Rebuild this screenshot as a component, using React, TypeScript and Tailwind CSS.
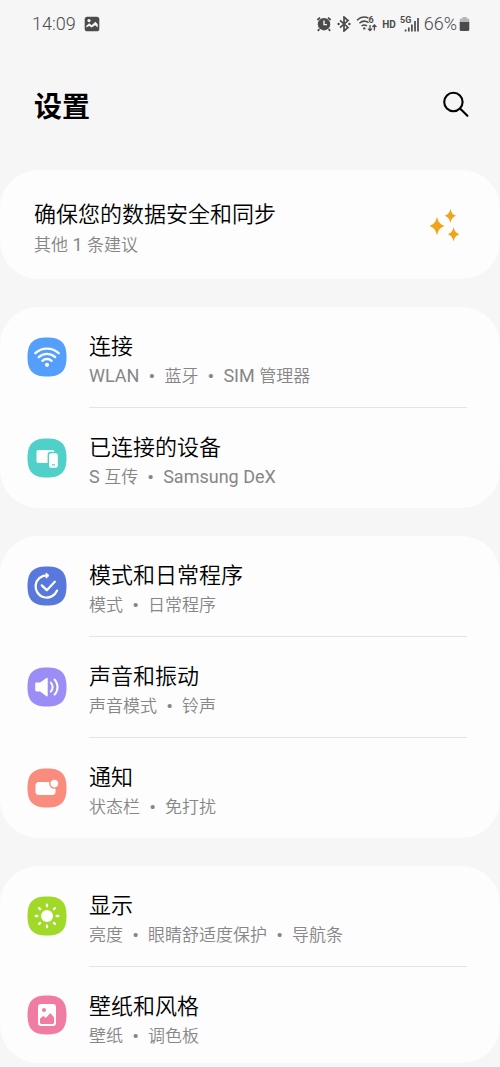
import { ReactNode } from "react"

const Tile = ({ color, children }: { color: string; children: ReactNode }) => (
  <svg viewBox="0 0 40 40" className={`size-10 shrink-0 ${color}`} aria-hidden="true">
    <path
      d="M20 .5C34 .5 39.5 6 39.5 20S34 39.5 20 39.5 .5 34 .5 20 6 .5 20 .5Z"
      fill="currentColor"
    />
    {children}
  </svg>
)

const WifiTile = () => (
  <Tile color="text-[#539ffb]">
    <g fill="none" stroke="#fff" strokeWidth="2.3" strokeLinecap="round">
      <path d="M8.3 16.2a17 17 0 0 1 23.4 0" />
      <path d="M11.8 20.1a12 12 0 0 1 16.4 0" />
      <path d="M15.4 23.8a6.8 6.8 0 0 1 9.2 0" />
    </g>
    <circle cx="20" cy="27.8" r="2.1" fill="#fff" />
  </Tile>
)

const DevicesTile = () => (
  <Tile color="text-[#4fd0c8]">
    <rect x="9.5" y="12" width="18" height="13" rx="1.8" fill="#fff" />
    <rect x="20.6" y="13.8" width="11.4" height="17.4" rx="3" fill="currentColor" />
    <rect x="22" y="15.2" width="8.8" height="14.6" rx="2" fill="#fff" />
    <path d="M25 26.8h3" stroke="currentColor" strokeWidth="1.2" />
  </Tile>
)

const ModesTile = () => (
  <Tile color="text-[#5878dc]">
    <g fill="none" stroke="#fff" strokeWidth="2.3" strokeLinecap="round" strokeLinejoin="round">
      <path d="M19.6 9.4A11.1 11.1 0 1 0 30 24.6" />
      <path d="m14.8 19.4 5 4.8 8-8.4" />
    </g>
    <path d="m19.2 7 2.8 2.5-2.8 2.7Z" fill="#fff" stroke="#fff" strokeLinejoin="round" />
  </Tile>
)

const SoundTile = () => (
  <Tile color="text-[#9b8df6]">
    <path
      d="M9.6 15.6h3.6l6.2-4.6c.7-.5 1.3-.2 1.3.6v17c0 .8-.6 1.1-1.3.6l-6.2-4.7H9.6c-.9 0-1.4-.5-1.4-1.4V17c0-.9.5-1.4 1.4-1.4Z"
      fill="#fff"
    />
    <g fill="none" stroke="#fff" strokeWidth="2" strokeLinecap="round">
      <path d="M23.8 15.6a6.4 6.4 0 0 1 0 9" />
      <path d="M27.6 12.6a11 11 0 0 1 0 15" />
    </g>
  </Tile>
)

const NoticeTile = () => (
  <Tile color="text-[#f98c7d]">
    <rect x="8.5" y="14" width="20" height="13" rx="3.5" fill="#fff" />
    <circle cx="27.4" cy="15.6" r="5.2" fill="currentColor" />
    <circle cx="27.4" cy="15.6" r="3.8" fill="#fff" />
  </Tile>
)

const DisplayTile = () => (
  <Tile color="text-[#a1d929]">
    <circle cx="20" cy="20" r="6" fill="#fff" />
    <g stroke="#fff" strokeWidth="2.3" strokeLinecap="round">
      <path d="M20 8.7v1.6M20 29.7v1.6M8.7 20h1.6M29.7 20h1.6" />
      <path d="m12 12 1.1 1.1M26.9 26.9 28 28M12 28l1.1-1.1M26.9 13.1 28 12" />
    </g>
  </Tile>
)

const WallpaperTile = () => (
  <Tile color="text-[#f07ca2]">
    <rect x="11" y="9" width="18" height="22" rx="3" fill="#fff" />
    <circle cx="17" cy="15" r="2" fill="currentColor" />
    <path
      d="M13 27.5v-3.8l2.4-2.1c.6-.5 1.2-.5 1.8 0l1.6 1.4 3.6-4.1c.6-.6 1.3-.6 1.8 0l2.9 3.5v5.1c0 .9-.5 1.4-1.4 1.4H14.4c-.9 0-1.4-.5-1.4-1.4Z"
      fill="currentColor"
    />
  </Tile>
)

const groups = [
  [
    { icon: <WifiTile />, title: "连接", tags: ["WLAN", "蓝牙", "SIM 管理器"] },
    { icon: <DevicesTile />, title: "已连接的设备", tags: ["S 互传", "Samsung DeX"] },
  ],
  [
    { icon: <ModesTile />, title: "模式和日常程序", tags: ["模式", "日常程序"] },
    { icon: <SoundTile />, title: "声音和振动", tags: ["声音模式", "铃声"] },
    { icon: <NoticeTile />, title: "通知", tags: ["状态栏", "免打扰"] },
  ],
  [
    { icon: <DisplayTile />, title: "显示", tags: ["亮度", "眼睛舒适度保护", "导航条"] },
    { icon: <WallpaperTile />, title: "壁纸和风格", tags: ["壁纸", "调色板"] },
  ],
]

const StatusBar = () => (
  <div className="flex h-12 items-center justify-between pl-8 pr-[30px] text-[#4b4b4b]">
    <div className="flex items-center gap-2">
      <span className="text-lg font-[350]">14:09</span>
      <svg viewBox="0 0 16 16" className="size-4" aria-hidden="true">
        <rect x=".7" y=".7" width="14.6" height="14.6" rx="2.6" fill="currentColor" />
        <path
          d="M2.3 11.4V9.8l3-2.5 2.3 2 3.8-3.6 2.3 2.6v3.1l-2.6-2.2-3.5 2.4-2.4-1.5Z"
          fill="#f6f6f6"
        />
        <circle cx="5" cy="4.6" r="1.6" fill="#f6f6f6" />
      </svg>
    </div>
    <div className="flex items-center">
      <svg viewBox="0 0 16 16" className="mr-1 size-4" aria-hidden="true">
        <circle cx="8" cy="8.2" r="6.2" fill="currentColor" />
        <path d="M8 4.6v4h3" fill="none" stroke="#f6f6f6" strokeWidth="1.4" />
        <path d="M1.4 4 4 1.6M14.6 4 12 1.6M3.4 13l-1.6 1.8M12.6 13l1.6 1.8" stroke="currentColor" strokeWidth="1.8" />
      </svg>
      <svg viewBox="0 0 16 16" className="mr-1 size-4" aria-hidden="true">
        <path d="m4 4.4 8 7L8 15V1l4 3.6-8 7" fill="none" stroke="currentColor" strokeWidth="1.7" />
        <circle cx="2.6" cy="8" r="1.2" fill="currentColor" />
        <circle cx="13.4" cy="8" r="1.2" fill="currentColor" />
      </svg>
      <svg viewBox="0 0 22 16" className="mr-1 h-4 w-[22px]" aria-hidden="true">
        <g fill="none" stroke="currentColor" strokeWidth="1.5">
          <path d="M1 4.2A10.6 10.6 0 0 1 12.4 2" />
          <path d="M3.4 7.2a7.6 7.6 0 0 1 9.2-.6" />
          <path d="M5.6 10a4.4 4.4 0 0 1 5.4 0" />
          <path d="M14 9v5.6M12 12.6l2 2 2-2M18.4 14.6V9M16.4 11l2-2 2 2" strokeWidth="1.3" />
        </g>
        <circle cx="8.3" cy="12.4" r="1.2" fill="currentColor" />
        <text x="12.4" y="7" fontSize="9" fontWeight="700" fill="currentColor">6</text>
      </svg>
      <span className="mr-1 text-[10px] font-bold">HD</span>
      <svg viewBox="0 0 20 20" className="mr-1 size-5" aria-hidden="true">
        <text x="0" y="9" fontSize="9" fontWeight="700" fill="currentColor">5G</text>
        <path d="M5.6 17.5v-2M8.8 17.5v-4M11.9 17.5v-7M15 17.5V7M18 17.5V4" stroke="currentColor" strokeWidth="1.7" />
      </svg>
      <span className="mr-0.5 text-lg font-[350]">66%</span>
      <svg viewBox="0 0 11 16" className="h-4 w-[11px]" aria-hidden="true">
        <path d="M3.4 1h4.2v1.6h1.2c.9 0 1.5.6 1.5 1.5V6H.7V4.1c0-.9.6-1.5 1.5-1.5h1.2Z" fill="#b5b5b5" />
        <path d="M.7 6h9.6v7.6c0 .9-.6 1.5-1.5 1.5H2.2c-.9 0-1.5-.6-1.5-1.5Z" fill="currentColor" />
      </svg>
    </div>
  </div>
)

// latin words sit one size up next to the chinese ones
const Mixed = ({ text }: { text: string }) => (
  <span className="whitespace-pre">
    {text.split(/([\w ]+)/).filter(Boolean).map((part, i) =>
      /\w/.test(part) ? <span key={i} className="text-[18px] font-normal">{part}</span> : part
    )}
  </span>
)

const Tags = ({ tags }: { tags: string[] }) => (
  <span className="flex text-[17px] font-[350] leading-[26px] text-[#868686]">
    {tags.map((tag, i) => (
      <span key={tag} className="flex">
        {i > 0 && <span className="w-[25px] text-center font-bold">•</span>}
        <Mixed text={tag} />
      </span>
    ))}
  </span>
)

export default function App() {
  return (
    <div className="bg-[#f6f6f6] pb-1 font-['Roboto','Noto_Sans_CJK_SC',sans-serif] text-black">
      <StatusBar />
      <header className="flex h-[122px] items-start justify-between pl-[34px] pr-[30px] pt-[38px]">
        <h1 className="text-[28px] font-bold leading-[44px]">设置</h1>
        <button type="button" aria-label="搜索" className="pt-1">
          <svg viewBox="0 0 28 28" className="size-7" fill="none" stroke="currentColor" strokeWidth="2.1">
            <circle cx="11.4" cy="12" r="9.2" />
            <path d="m18 18.6 7.4 7.2" strokeLinecap="round" />
          </svg>
        </button>
      </header>

      <main className="flex flex-col gap-7">
        <a href="#sync" className="flex items-center justify-between rounded-[38px] bg-[#fdfdfd] pb-5 pl-[34px] pr-[38px] pt-[29px]">
          <span>
            <span className="block text-[22px] font-[350] leading-8">确保您的数据安全和同步</span>
            <span className="block text-[17px] font-[350] leading-7 text-[#868686]">
              <Mixed text="其他 1 条建议" />
            </span>
          </span>
          <svg viewBox="0 0 34 44" className="h-11 w-[34px] text-[#eea51a]" fill="currentColor" aria-hidden="true">
            <path d="M9 9.4c1.2 5.4 2.7 7.6 7.6 9.6-4.9 2-6.4 4.2-7.6 9.6C7.8 23.2 6.3 21 1.4 19 6.3 17 7.8 14.8 9 9.4Z" />
            <path d="M22.4 1.4c.9 4.2 2 5.8 5.8 7.4-3.8 1.6-4.9 3.2-5.8 7.4-.9-4.2-2-5.8-5.8-7.4 3.8-1.6 4.9-3.2 5.8-7.4Z" />
            <path d="M25.6 19.8c.9 4.2 2 5.8 5.8 7.4-3.8 1.6-4.9 3.2-5.8 7.4-.9-4.2-2-5.8-5.8-7.4 3.8-1.6 4.9-3.2 5.8-7.4Z" />
          </svg>
        </a>

        {groups.map((rows, g) => (
          <ul key={g} className="rounded-[38px] bg-[#fdfdfd]">
            {rows.map((row, i) => (
              <li key={row.title}>
                <a href={`#${row.title}`} className="flex items-center gap-[22px] pl-[27px] pr-[33px]">
                  {row.icon}
                  <span
                    className={`grow pt-6 ${i > 0 ? "border-t border-[#e4e4e4]" : ""} ${
                      g === 2 && i === 1 ? "pb-3.5" : "pb-[18px]"
                    }`}
                  >
                    <span className="block text-[22px] font-[350] leading-8">{row.title}</span>
                    <Tags tags={row.tags} />
                  </span>
                </a>
              </li>
            ))}
          </ul>
        ))}
      </main>
    </div>
  )
}
